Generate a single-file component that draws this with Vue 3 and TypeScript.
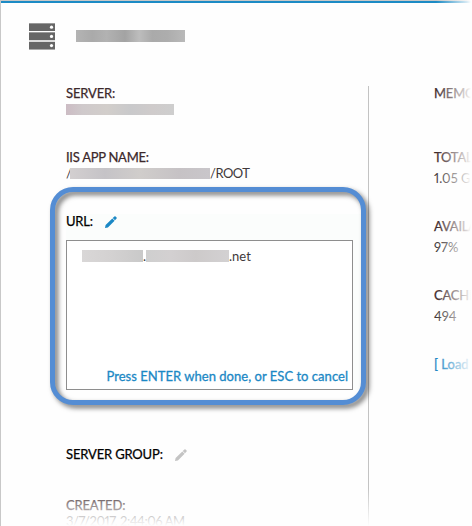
<script setup lang="ts">
interface Metric {
  label: string
  value: string
}

interface Drive {
  y: number
  dot: number
}

const metrics: Metric[] = [
  { label: 'TOTAL', value: '1.05 G' },
  { label: 'AVAILA', value: '97%' },
  { label: 'CACHE', value: '494' },
]
const drives: Drive[] = [
  { y: 1, dot: 4.2 },
  { y: 10, dot: 13.4 },
  { y: 19, dot: 22.6 },
]
</script>

<template>
  <main class="page">
    <header class="head">
      <svg class="server-icon" viewBox="0 0 26 27" width="26" height="27">
        <rect width="26" height="1" fill="#999" />
        <rect y="9" width="26" height="1" fill="#999" />
        <rect y="17" width="26" height="2" fill="#dcdcdc" />
        <rect y="26" width="26" height="1" fill="#aaa" />
        <g v-for="d in drives" :key="d.y">
          <rect x="0" :y="d.y" width="26" height="7" fill="#666" />
          <circle cx="22.5" :cy="d.dot" r="1.6" fill="#fff" />
        </g>
      </svg>
      <span class="redact title"></span>
    </header>

    <div class="columns">
      <section class="left">
        <div class="field server">
          <div class="label"><span class="t-server">SERVER:</span></div>
          <span class="redact host"></span>
        </div>
        <div class="field app">
          <div class="label"><span class="t-iis">IIS APP NAME:</span></div>
          <div class="value path"><span class="slash">/</span><span class="redact app-name"></span><span class="t-root">/ROOT</span></div>
        </div>
        <div class="editor">
          <div class="label black">
            <span class="t-url">URL:</span>
            <svg class="pencil blue" viewBox="0 0 12 12" width="12" height="12">
              <path d="M0 12 .6 9.1 7.3 2.4 9.6 4.7 2.9 11.4ZM7.7 2 9.4.4Q10 0 10.6.5L11.6 1.5Q12 2 11.6 2.6L10 4.3Z" />
            </svg>
          </div>
          <div class="box">
            <div class="value url"><span class="redact sub"></span><span class="dot">.</span><span class="redact domain"></span><span class="t-net">.net</span></div>
            <div class="hint"><span class="t-hint">Press ENTER when done, or ESC to cancel</span></div>
          </div>
          <div class="ring"></div>
        </div>
        <div class="label black group">
          <span class="t-group">SERVER GROUP:</span>
          <svg class="pencil gray" viewBox="0 0 12 12" width="12" height="12">
            <path d="M0 12 .6 9.1 7.3 2.4 9.6 4.7 2.9 11.4ZM7.7 2 9.4.4Q10 0 10.6.5L11.6 1.5Q12 2 11.6 2.6L10 4.3Z" />
          </svg>
        </div>
        <div class="created">
          <div class="label"><span class="t-created">CREATED:</span></div>
          <div class="value"><span class="t-date">3/7/2017, 2:44:06 AM</span></div>
        </div>
      </section>

      <section class="right">
        <div class="label memory"><span>MEMO</span></div>
        <div v-for="m in metrics" :key="m.label" class="metric">
          <div class="label"><span>{{ m.label }}</span></div>
          <div class="value"><span>{{ m.value }}</span></div>
        </div>
        <div class="load">[ Load</div>
      </section>
    </div>
    <div class="fade-right"></div>
    <div class="fade-bottom"></div>
  </main>
</template>

<style>
body {
  background: #fff;
}
</style>

<style scoped>
.page {
  position: relative;
  box-sizing: border-box;
  width: 472px;
  height: 526px;
  overflow: hidden;
  background: linear-gradient(#c8c8c8 0 1px, #1c8bc5 1px 3px, transparent 3px), #fefefe;
  border-left: 1px solid #c8c8c8;
  font-family: Lato, "Liberation Sans", sans-serif;
  font-size: 13px;
  line-height: 14px;
  color: #41393b;
  white-space: nowrap;
}
.head {
  display: flex;
  height: 86px;
  box-sizing: border-box;
  padding: 23px 0 0 28px;
}
.server-icon {
  display: block;
}
.redact {
  display: block;
  flex: none;
}
.title {
  width: 109px;
  height: 12px;
  margin: 7px 0 0 21px;
  background: linear-gradient(90deg, #b4b4b4, #aaa 15%, #b2b2b2 28%, #a3a3a3 45%, #bdbdbd 58%, #aaa 70%, #adadad 84%, #b9b9b9);
}
.columns {
  display: flex;
  height: 440px;
}
.left {
  flex: none;
  width: 302px;
  padding-left: 65px;
  border-right: 1px solid #c3c3c3;
}
.right {
  flex: none;
  padding-left: 65px;
}
.right .label {
  letter-spacing: -0.2px;
}
.label {
  display: flex;
  height: 16px;
  color: #3c282b;
  -webkit-text-stroke: 0.25px currentColor;
}
.label.black {
  color: #000;
}
.value {
  display: flex;
  height: 16px;
  font-feature-settings: "pnum";
}
.t-server,
.t-created,
.t-group {
  letter-spacing: -0.16px;
}
.t-iis {
  letter-spacing: -0.27px;
}
.t-url {
  letter-spacing: -0.2px;
}
.t-root {
  letter-spacing: -0.5px;
}
.t-date {
  letter-spacing: -0.45px;
}
.t-hint {
  letter-spacing: 0.03px;
}
.server {
  height: 64px;
}
.host {
  width: 108px;
  height: 11px;
  margin-top: 2px;
  background: linear-gradient(90deg, #ccbcc4, #cfc9cb 15%, #d2cecb 38%, #c9c9cb 60%, #cfcbcb 80%, #cecece);
}
.app {
  height: 64px;
}
.slash {
  width: 4px;
}
.app-name {
  width: 140px;
  height: 11px;
  margin-top: 2px;
  background: linear-gradient(90deg, #d3cfd0, #c5c3c7 25%, #d0cdcb 50%, #c6c2c5 78%, #c9c6ca);
}
.editor {
  position: relative;
  width: 295px;
  height: 176px;
  background: #fbfdfc;
}
.pencil {
  margin-top: 2px;
}
.blue {
  fill: #1b88c5;
  margin-left: 12px;
}
.gray {
  fill: #c4c4c4;
  margin-left: 12px;
}
.box {
  display: flex;
  flex-direction: column;
  justify-content: space-between;
  box-sizing: border-box;
  width: 287px;
  height: 150px;
  margin-top: 10px;
  padding: 8px 4px 4px 15px;
  border: 1px solid #8e8e8e;
  background: #fff;
}
.sub {
  width: 61px;
  height: 12px;
  margin-top: 1px;
  background: linear-gradient(90deg, #d9d7d7, #d3d1d1 50%, #c9c9c9);
}
.dot {
  width: 3px;
}
.domain {
  width: 83px;
  height: 12px;
  margin-top: 1px;
  background: linear-gradient(90deg, #cfcfcf, #d3d0d1 30%, #cdcaca 60%, #d3d1d2);
}
.hint {
  display: flex;
  justify-content: flex-end;
  height: 16px;
  color: #1b88c5;
  -webkit-text-stroke: 0.3px currentColor;
}
.ring {
  position: absolute;
  left: -16px;
  top: -27px;
  box-sizing: border-box;
  width: 316px;
  height: 218px;
  border: 5px solid #548dd4;
  border-radius: 23px;
  filter: drop-shadow(3px 3px 2.5px rgba(0, 0, 0, 0.55));
}
.group {
  margin-top: 57px;
}
.created {
  margin-top: 35px;
}
.memory {
  margin-bottom: 48px;
}
.metric {
  height: 69px;
}
.metric .value {
  margin-top: 5px;
}
.load {
  color: #1b88c5;
  -webkit-text-stroke: 0.3px currentColor;
}
.fade-right {
  position: absolute;
  top: 0;
  right: 0;
  width: 36px;
  height: 526px;
  background: linear-gradient(90deg, rgba(254, 254, 254, 0), rgba(254, 254, 254, 0.82) 85%, #fefefe 97%);
}
.fade-bottom {
  position: absolute;
  left: -1px;
  right: 0;
  bottom: 0;
  height: 38px;
  background: linear-gradient(rgba(254, 254, 254, 0), #fefefe);
}
</style>
